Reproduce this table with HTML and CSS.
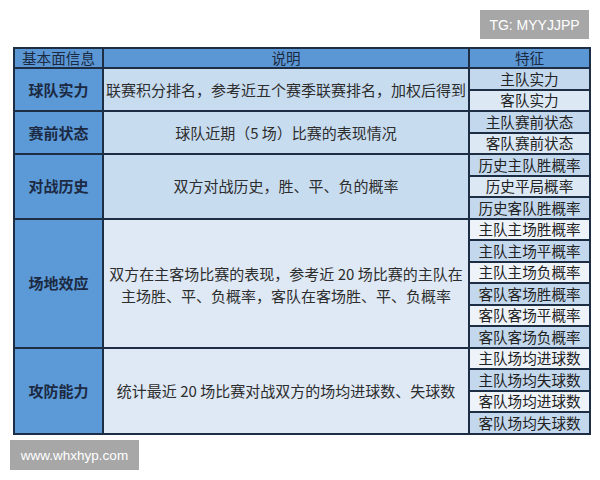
FILE: index.html
```html
<!DOCTYPE html>
<html lang="zh">
<head>
<meta charset="utf-8">
<link rel="stylesheet" href="styles.css">
</head>
<body>
<div class="page">
  <div class="top"><span class="badge tg">TG: MYYJJPP</span></div>
  <table class="grid">
    <thead>
      <tr class="head">
        <th class="c1">基本面信息</th>
        <th class="c2">说明</th>
        <th class="c3">特征</th>
      </tr>
    </thead>
    <tbody>
      <tr><td class="lab" rowspan="2">球队实力</td><td class="desc blue" rowspan="2">联赛积分排名，参考近五个赛季联赛排名，加权后得到</td><td class="f b">主队实力</td></tr>
      <tr><td class="f l">客队实力</td></tr>
      <tr><td class="lab" rowspan="2">赛前状态</td><td class="desc blue" rowspan="2">球队近期（5 场）比赛的表现情况</td><td class="f b">主队赛前状态</td></tr>
      <tr><td class="f l">客队赛前状态</td></tr>
      <tr><td class="lab" rowspan="3">对战历史</td><td class="desc blue" rowspan="3">双方对战历史，胜、平、负的概率</td><td class="f b">历史主队胜概率</td></tr>
      <tr><td class="f l">历史平局概率</td></tr>
      <tr><td class="f b">历史客队胜概率</td></tr>
      <tr><td class="lab" rowspan="6">场地效应</td><td class="desc pale two" rowspan="6">双方在主客场比赛的表现，参考近 20 场比赛的主队在<br>主场胜、平、负概率，客队在客场胜、平、负概率</td><td class="f w">主队主场胜概率</td></tr>
      <tr><td class="f b">主队主场平概率</td></tr>
      <tr><td class="f w">主队主场负概率</td></tr>
      <tr><td class="f b">客队客场胜概率</td></tr>
      <tr><td class="f w">客队客场平概率</td></tr>
      <tr><td class="f b">客队客场负概率</td></tr>
      <tr><td class="lab" rowspan="4">攻防能力</td><td class="desc pale" rowspan="4">统计最近 20 场比赛对战双方的场均进球数、失球数</td><td class="f w">主队场均进球数</td></tr>
      <tr><td class="f b">主队场均失球数</td></tr>
      <tr><td class="f w">客队场均进球数</td></tr>
      <tr><td class="f b">客队场均失球数</td></tr>
    </tbody>
  </table>
  <div class="bottom"><span class="badge site">www.whxhyp.com</span></div>
</div>
</body>
</html>
```

FILE: styles.css
```css
html, body {
  margin: 0;
  padding: 0;
  background: #ffffff;
}
body {
  font-family: "Noto Sans CJK SC", "Liberation Sans", sans-serif;
  color: #2b2b2b;
}
.page {
  width: 600px;
  height: 480px;
  display: flex;
  flex-direction: column;
}
.top {
  height: 29px;
  margin-top: 10px;
  padding-right: 11px;
  display: flex;
  justify-content: flex-end;
}
.badge {
  background: #a7a7a7;
  color: #ffffff;
  font-family: "Liberation Sans", "DejaVu Sans", sans-serif;
  display: flex;
  align-items: center;
  justify-content: center;
}
.tg {
  width: 109px;
  height: 29px;
  font-size: 14px;
}
.grid {
  margin: 8px 0 0 13px;
  width: 572px;
  height: 388px;
  border-collapse: collapse;
  table-layout: fixed;
  border: 2px solid #1c2d44;
}
.grid td, .grid th {
  border: 2px solid #1c2d44;
  padding: 0;
  text-align: center;
  vertical-align: middle;
  line-height: 18px;
}
.head th {
  height: 18px;
  background: #5b97d5;
  font-weight: 400;
  font-size: 14.6px;
  color: #1b2a40;
}
.c1 { width: 87px; }
.c2 { width: 364px; }
.c3 { width: 119px; }
.lab {
  background: #5c99d7;
  font-weight: 700;
  font-size: 15px;
  color: #1b2a42;
}
.grid .desc {
  font-size: 15px;
  line-height: 20px;
  color: #2d2d2d;
}
.grid .desc.two {
  line-height: 22px;
  padding-top: 3px;
}
.desc.blue { background: #c8dcf0; }
.desc.pale { background: #dfe9f5; }
.f {
  height: 17px;
  font-size: 14.6px;
  color: #222222;
}
.f.b { background: #c4d8ed; }
.f.l { background: #dce8f4; }
.f.w { background: #eef3f9; }
.bottom {
  margin-top: 5px;
  padding-left: 10px;
  display: flex;
}
.site {
  width: 129px;
  height: 30px;
  font-size: 13.5px;
}
```
